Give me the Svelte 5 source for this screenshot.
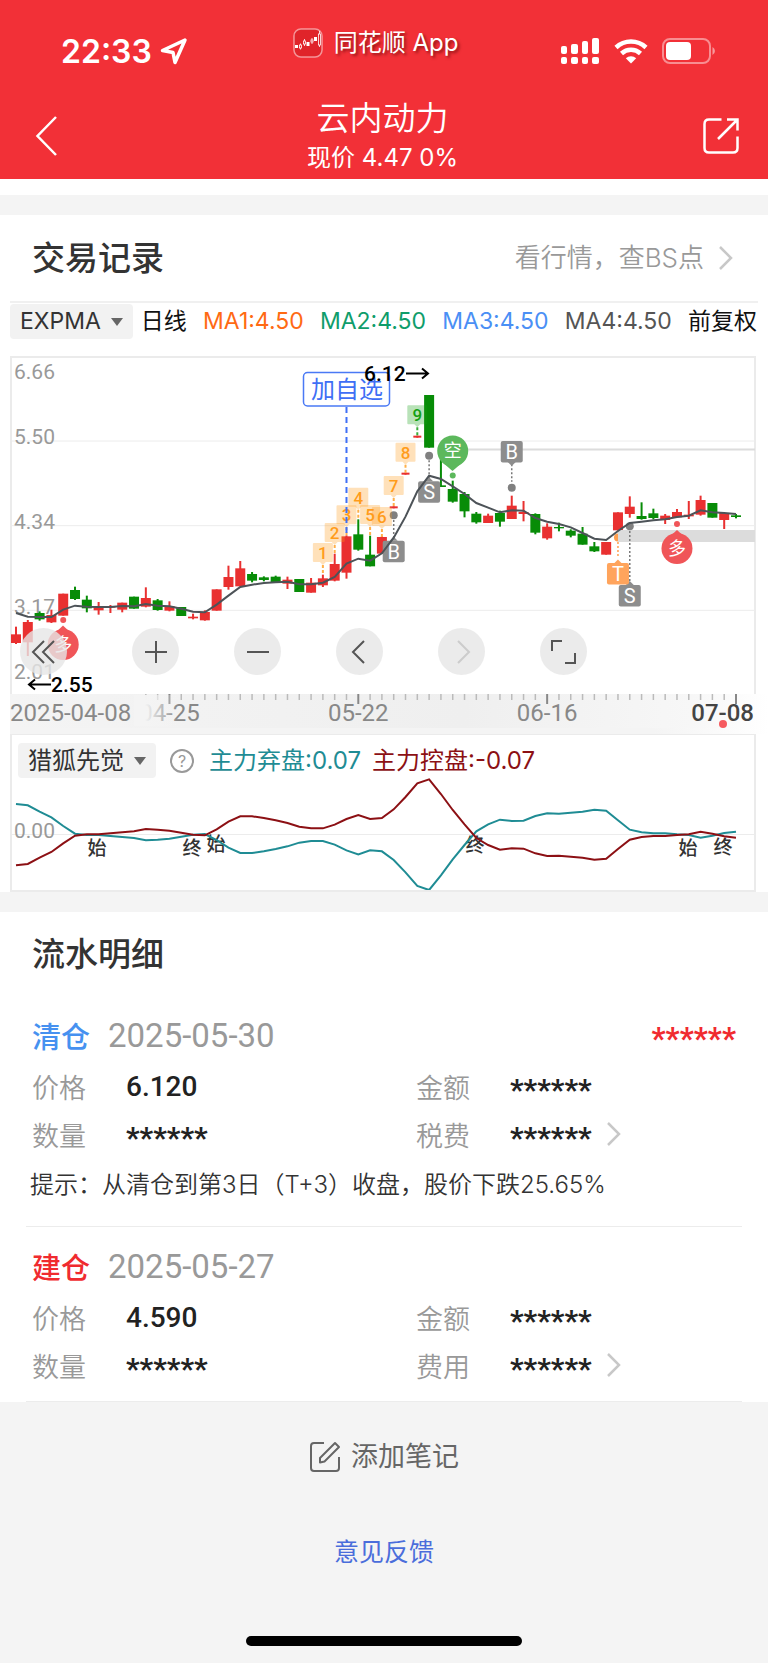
<script>
  const step = 720 / 61;
  const x = (i) => 16 + i * step;
  // series heights are kept at three units per chart pixel
  const y = (v) => v / 3;

  // colour, body top, body bottom, wick top, wick bottom
  const candles = [
    ['r', 853, 879, 830, 882], ['r', 816, 877, 810, 918], ['g', 789, 808, 784, 812], ['r', 795, 817, 779, 819],
    ['r', 731, 797, 731, 797], ['g', 720, 747, 710, 750], ['g', 749, 775, 737, 787], ['r', 772, 781, 756, 794],
    ['r', 770, 773, 765, 789], ['r', 758, 779, 758, 787], ['g', 740, 776, 740, 776], ['r', 744, 770, 712, 772],
    ['g', 751, 780, 747, 782], ['r', 768, 782, 754, 784], ['g', 771, 798, 771, 798], ['r', 800, 805, 791, 808],
    ['r', 786, 811, 781, 812], ['r', 718, 782, 718, 782], ['r', 681, 711, 647, 719], ['r', 655, 709, 633, 709],
    ['g', 672, 692, 666, 697], ['g', 682, 690, 679, 694], ['g', 680, 696, 677, 696], ['r', 689, 701, 680, 717],
    ['g', 687, 726, 687, 726], ['r', 698, 728, 684, 728], ['r', 685, 706, 674, 711], ['r', 642, 692, 611, 694],
    ['r', 559, 668, 556, 686], ['g', 553, 599, 508, 602], ['g', 614, 649, 557, 649], ['r', 561, 611, 558, 611],
    ['r', 469, 475, 469, 475], ['r', 368, 374, 368, 374], ['r', 257, 263, 257, 263], ['g', 135, 293, 135, 293],
    ['g', 406, 411, 298, 411], ['g', 417, 455, 392, 458], ['g', 432, 484, 426, 502], ['g', 491, 517, 486, 521],
    ['r', 497, 519, 491, 519], ['g', 489, 515, 482, 530], ['r', 467, 507, 437, 507], ['r', 486, 492, 453, 514],
    ['g', 492, 548, 490, 553], ['r', 530, 565, 520, 569], ['g', 531, 535, 518, 544], ['g', 542, 557, 538, 562],
    ['g', 551, 584, 531, 584], ['g', 589, 604, 576, 606], ['r', 576, 614, 576, 614], ['r', 487, 541, 487, 541],
    ['r', 470, 492, 439, 503], ['g', 498, 507, 457, 509], ['g', 490, 504, 476, 508], ['r', 497, 510, 492, 522],
    ['r', 486, 502, 477, 502], ['r', 494, 499, 453, 507], ['r', 450, 494, 437, 497], ['g', 459, 503, 459, 503],
    ['r', 489, 510, 489, 537], ['g', 496, 501, 492, 505]
  ];

  const average = [
    789, 800, 801, 801, 779, 767, 770, 771, 771, 768, 769, 762, 767, 769, 776, 785, 787, 764, 737, 711, 704,
    699, 697, 695, 703, 703, 698, 681, 641, 626, 632, 610, 563, 500, 424, 377, 387, 409, 432, 459, 473,
    487, 481, 482, 504, 515, 522, 532, 549, 566, 570, 543, 519, 515, 511, 508, 501, 497, 481, 487, 489, 492
  ];

  const discard = [
    237, 241, 260, 277, 303, 326, 330, 330, 333, 336, 339, 346, 344, 341, 335, 329, 327, 345, 368, 384, 384,
    379, 372, 364, 353, 348, 348, 359, 376, 388, 376, 379, 405, 442, 483, 495, 451, 403, 360, 319, 298,
    284, 288, 287, 273, 265, 266, 263, 260, 254, 257, 286, 314, 322, 325, 325, 328, 330, 338, 332, 324, 320
  ];
  const control = discard.map((v) => 658 - v);

  const line = (points) => points.map((v, i) => `${x(i)},${y(v)}`).join(' ');

  // nine-turn counters: candle, top of the flag, end of its stem
  const counters = [
    [26, 579, 674], [27, 519, 611], [28, 466, 559], [29, 413, 508], [30, 465, 557],
    [31, 471, 561], [32, 378, 470], [33, 278, 368], [34, 166, 257]
  ];

  // letter, candle, dot, box top
  const trades = [
    ['S', 35, 317, 394],
    ['B', 32, 496, 572],
    ['B', 42, 413, 273],
    ['S', 52, 529, 705]
  ];

  const grid = [273, 527, 781];
  const prices = [['6.66', 88], ['5.50', 283], ['4.34', 537], ['3.17', 791], ['2.01', 986]];
  const dates = [['04-25', 13], ['05-22', 29], ['06-16', 45]];
  const ticks = Array.from({ length: 51 }, (_, k) => k + 11);
  const phases = [['始', 97, 130], ['终', 192, 130], ['始', 216, 126], ['终', 475, 127], ['始', 688, 130], ['终', 723, 129]];

  const averages = [
    ['MA1:4.50', 'ma1'],
    ['MA2:4.50', 'ma2'],
    ['MA3:4.50', 'ma3'],
    ['MA4:4.50', 'ma4']
  ];

  const records = [
    { kind: '清仓', cls: 'sell', date: '2025-05-30', profit: '******', price: '6.120', fee: '税费', hint: '提示：从清仓到第3日（T+3）收盘，股价下跌25.65%' },
    { kind: '建仓', cls: 'buy', date: '2025-05-27', profit: '', price: '4.590', fee: '费用', hint: '' }
  ];
</script>

{#snippet arrow()}
  <svg class="arrow" width="16" height="26" viewBox="0 0 16 26"><path d="M2 2L13 13L2 24" fill="none" stroke="#c8c8c8" stroke-width="2.500" /></svg>
{/snippet}

<div class="page">
  <header>
    <div class="status">
      <div class="time">
        22:33
        <svg width="28" height="28" viewBox="0 0 28 28"><path d="M25 3L2.500 13.500L13 15.500L15 25.500Z" fill="none" stroke="#fff" stroke-width="3.500" stroke-linejoin="round" /></svg>
      </div>
      <div class="app">
        <svg width="30" height="30" viewBox="0 0 30 30">
          <rect x="1" y="1" width="28" height="28" rx="7" fill="#e0242a" stroke="#fff" stroke-opacity=".5" stroke-width="1.500" />
          <g fill="#fff"><rect x="2" y="17" width="3" height="3" /><rect x="13.500" y="14" width="3" height="4" /><rect x="21" y="9" width="3" height="4" /></g>
          <g fill="none" stroke="#fff" stroke-width=".8"><path d="M7.500 15.500v6M11.500 11v7M19 10v6M26.500 3v16" /><rect x="6.500" y="17" width="2" height="3" fill="#e0242a" /><rect x="10.500" y="13" width="2" height="3" fill="#e0242a" /><rect x="18" y="12" width="2" height="2" fill="#e0242a" /><rect x="25.500" y="6" width="2" height="11" fill="#e0242a" /></g>
        </svg>
        <span>同花顺 App</span>
      </div>
      <div class="signals">
        <svg width="40" height="28" viewBox="0 0 40 28" fill="#fff">
          <rect x="1" y="9" width="6" height="8" rx="2" /><rect x="11" y="7" width="7" height="10" rx="2" /><rect x="22" y="4" width="6" height="13" rx="2" /><rect x="32" y="1" width="7" height="16" rx="2" />
          <rect x="1" y="20" width="6" height="7" rx="2" /><rect x="11" y="20" width="7" height="7" rx="2" /><rect x="22" y="20" width="6" height="7" rx="2" /><rect x="32" y="20" width="7" height="7" rx="2" />
        </svg>
        <svg width="34" height="26" viewBox="0 0 34 26">
          <g fill="none" stroke="#fff" stroke-width="4.500"><path d="M2 9.500A22 22 0 0 1 32 9.500" /><path d="M7.500 15.500A14 14 0 0 1 26.500 15.500" /></g>
          <path d="M17 25.500L11.800 20.300A7.500 7.500 0 0 1 22.200 20.300Z" fill="#fff" />
        </svg>
        <svg width="54" height="26" viewBox="0 0 54 26">
          <rect x="1" y="1" width="47" height="24" rx="7" fill="none" stroke="#fff" stroke-opacity=".45" stroke-width="2" />
          <rect x="4" y="4" width="25" height="18" rx="4" fill="#fff" /><path d="M50.500 9a4.500 4.500 0 0 1 0 8z" fill="#fff" fill-opacity=".5" />
        </svg>
      </div>
    </div>
    <div class="nav">
      <button class="icon back" aria-label="返回">
        <svg width="24" height="42" viewBox="0 0 24 42"><path d="M21 2L2.500 21L21 40" fill="none" stroke="#fff" stroke-width="2.500" /></svg>
      </button>
      <div class="stock">
        <h1>云内动力</h1>
        <p>现价 4.47 0%</p>
      </div>
      <button class="icon" aria-label="分享">
        <svg width="38" height="38" viewBox="0 0 38 38" fill="none" stroke="#fff" stroke-width="2.500">
          <path d="M19.500 2.500H7Q2.500 2.500 2.500 7V31Q2.500 35.500 7 35.500H31Q35.500 35.500 35.500 31V19.500M25 2.500H35.500V13.500M35.500 2.500L16 22" />
        </svg>
      </button>
    </div>
  </header>

  <section class="trading">
    <div class="heading">
      <h2>交易记录</h2>
      <a href="#quotes">看行情，查BS点 {@render arrow()}</a>
    </div>

    <div class="legend">
      <button class="picker">EXPMA <i></i></button>
      <div class="values">
        <span>日线</span>
        {#each averages as [text, cls]}
          <span class={cls}>{text}</span>
        {/each}
        <span>前复权</span>
      </div>
    </div>

    <div class="chart">
      <svg viewBox="0 0 768 378" role="img" aria-label="日K线">
        <defs>
          <linearGradient id="strip"><stop offset="0" stop-color="#f4f4f4" /><stop offset=".6" stop-color="#efefef" /><stop offset=".9" stop-color="#f7f7f7" /><stop offset="1" stop-color="#fff" /></linearGradient>
          <linearGradient id="fade"><stop offset="0" stop-color="#f4f4f4" /><stop offset=".25" stop-color="#f4f4f4" /><stop offset="1" stop-color="#f4f4f4" stop-opacity="0" /></linearGradient>
        </defs>
        <path d="M11 344V7H755V344" fill="none" stroke="#ebebeb" stroke-width="2" />
        <rect x="10" y="344" width="758" height="34" fill="url(#strip)" />

        {#each grid as g}
          <path d="M10 {y(g)}H755" stroke="#ececec" />
        {/each}
        <path d="M468 99.500H755" stroke="#dcdcdc" stroke-width="2" />

        <g class="price">
          {#each prices as [text, base]}
            <text x="14" y={y(base)}>{text}</text>
          {/each}
        </g>

        {#each candles as [c, top, bottom, high, low], i}
          <g class={c}>
            <rect x={x(i) - 1} y={y(high)} width="2" height={y(low - high)} />
            <rect x={x(i) - (i > 31 && i < 35 ? 4 : 5)} y={y(top)} width={i > 31 && i < 35 ? 8 : 10} height={y(bottom - top)} />
          </g>
        {/each}

        <circle cx={x(51)} cy="187.500" r="4" fill="#ff9f4f" />
        <rect x="618" y="180" width="137" height="12" fill="#dcdcdc" />

        <!-- trade markers -->
        {#each trades as [letter, i, dot, top]}
          <path d={dot > top ? `M${x(i)} ${y(top + 70)}V${y(dot - 18)}` : `M${x(i)} ${y(dot + 14)}V${y(top - 6)}`} stroke="#777" stroke-width="1.500" stroke-dasharray="2 2" />
          <circle cx={x(i)} cy={y(dot)} r="4" fill="#808080" />
          <rect x={x(i) - 11} y={y(top)} width="22" height="21.500" rx="2" fill="#8d8d8d" />
          <path d={dot > top ? `M${x(i) - 4} ${y(top + 63)}h8l-4 4z` : `M${x(i) - 4} ${y(top)}h8l-4 -4z`} fill="#8d8d8d" />
          <text class="letter" x={x(i)} y={y(top) + 18}>{letter}</text>
        {/each}
        <path d="M{x(51)} 192V206" stroke="#ff9f4f" stroke-width="1.500" stroke-dasharray="2 2" />
        <rect x={x(51) - 11} y="213" width="22" height="21.500" rx="2" fill="#ffa45c" />
        <path d="M{x(51) - 4} 213.500h8l-4 -4z" fill="#ffa45c" />
        <text class="letter" x={x(51)} y="231">T</text>

        <polyline points={line(average)} fill="none" stroke="#4d5358" stroke-width="2" />

        <!-- counters -->
        {#each counters as [i, top, end], k}
          <g class={k === 8 ? 'nine' : 'count'}>
            <path class="stem" d="M{x(i)} {y(top + 66)}V{y(end)}" />
            <path class="flag" d="M{x(i) - 9} {y(top)}h18q1 0 1 1v17q0 1 -1 1h-6l-3 3l-3 -3h-6q-1 0 -1 -1v-17q0 -1 1 -1z" />
            <text x={x(i)} y={y(top) + 16}>{k + 1}</text>
          </g>
        {/each}

        <!-- added to watch list -->
        <rect x="303.500" y="22.500" width="86" height="33.500" rx="4" fill="#fff" stroke="#4a79f5" stroke-width="1.500" />
        <path d="M{x(28)} 57V186" stroke="#3f6ff5" stroke-width="2" stroke-dasharray="6 4" />
        <text class="watch" x="347" y="48">加自选</text>

        <!-- long and short signals -->
        <g class="short">
          <path d="M442 112L452.500 121L463 112Z" /><circle cx={x(37)} cy="101" r="15.500" /><circle cx={x(37)} cy="125.500" r="3" />
          <text x={x(37)} y="107">空</text>
        </g>
        <g class="long">
          <path d="M666 190L677 180L688 190Z" /><circle cx={x(56)} cy="198.500" r="15.500" /><circle cx={x(56)} cy="174" r="3" />
          <text x={x(56)} y="205">多</text>
          <path d="M52 286L63 275.500L74 286Z" /><circle cx={x(4)} cy="294.500" r="15.500" /><circle cx={x(4)} cy="270" r="3" />
          <text x={x(4)} y="301">多</text>
        </g>

        <g class="extreme">
          <text x="364" y="31">6.12</text><path d="M406 23.500H427M422 18.500L428 23.500L422 28.500" />
          <text x="51" y="342">2.55</text><path d="M51 334.500H30M35 329.500L29 334.500L35 339.500" />
        </g>

        <!-- time axis -->
        {#each ticks as i}
          <path d="M{x(i)} 344V{i % 16 === 13 ? 354 : 350}" stroke={i % 16 === 13 ? '#888' : '#bbb'} stroke-width={i % 16 === 13 ? 2 : 1.5} />
        {/each}
        <g class="date">
          {#each dates as [text, i]}
            <text x={x(i)} y="371" text-anchor="middle">{text}</text>
          {/each}
          <rect x="134" y="345" width="44" height="31" fill="url(#fade)" />
          <text x="10" y="371">2025-04-08</text>
          <text class="now" x="754" y="371" text-anchor="end">07-08</text>
        </g>
        <circle cx="723" cy="374" r="4" fill="#f65a5f" />
      </svg>

      <div class="tools">
        <button aria-label="最早"><svg viewBox="0 0 47 47"><path d="M24 13L13 24L24 35M34 13L23 24L34 35" /></svg></button>
        <button aria-label="放大"><svg viewBox="0 0 47 47"><path d="M13 24H35M24 13V35" /></svg></button>
        <button aria-label="缩小"><svg viewBox="0 0 47 47"><path d="M13 24H35" /></svg></button>
        <button aria-label="上一段"><svg viewBox="0 0 47 47"><path d="M28 13L17 24L28 35" /></svg></button>
        <button aria-label="下一段" disabled><svg viewBox="0 0 47 47"><path d="M20 13L31 24L20 35" /></svg></button>
        <button aria-label="全屏"><svg viewBox="0 0 47 47"><path d="M12 23V13H22M25 35H35V25" /></svg></button>
      </div>
    </div>

    <div class="strip"></div>

    <div class="indicator">
      <div class="legend">
        <button class="picker">猎狐先觉 <i></i></button>
        <button class="help" aria-label="说明">?</button>
        <span class="discard">主力弃盘:0.07</span>
        <span class="control">主力控盘:-0.07</span>
      </div>
      <svg viewBox="12 53 742 112" role="img" aria-label="猎狐先觉">
        <path d="M12 109.500H754" stroke="#ececec" />
        <text class="zero" x="14" y="113">0.00</text>
        {#each phases as [text, px, py]}
          <text class="phase" x={px} y={py}>{text}</text>
        {/each}
        <polyline points={line(discard)} fill="none" stroke="#1f8c94" stroke-width="2" />
        <polyline points={line(control)} fill="none" stroke="#8c1014" stroke-width="2" />
      </svg>
    </div>
  </section>

  <section class="details">
    <h2>流水明细</h2>
    {#each records as r}
      <article>
        <div class="top">
          <strong class={r.cls}>{r.kind}</strong>
          <time>{r.date}</time>
          <span class="mask profit">{r.profit}</span>
        </div>
        <dl>
          <div><dt>价格</dt><dd>{r.price}</dd></div>
          <div><dt>金额</dt><dd class="mask">******</dd></div>
          <div><dt>数量</dt><dd class="mask">******</dd></div>
          <div><dt>{r.fee}</dt><dd class="mask">******</dd>{@render arrow()}</div>
        </dl>
        {#if r.hint}
          <p>{r.hint}</p>
        {/if}
      </article>
    {/each}
  </section>

  <footer>
    <button class="note">
      <svg width="32" height="32" viewBox="0 0 32 32" fill="none" stroke="#666" stroke-width="2">
        <path d="M15 2H5Q2 2 2 5V27Q2 30 5 30H27Q30 30 30 27V16" />
        <path d="M11 21.500V17L26 2L30 6L15.500 20.500Z" stroke-linejoin="round" />
      </svg>
      添加笔记
    </button>
    <a href="#feedback">意见反馈</a>
    <div class="home"></div>
  </footer>
</div>

<style>
  :global(body) {
    background: #f4f4f4;
  }

  .page {
    font-family: Inter, "Noto Sans CJK SC", sans-serif;
    color: #333;
  }

  h1, h2, p, dl, dd {
    margin: 0;
  }

  button {
    font: inherit;
    color: inherit;
    border: none;
    padding: 0;
    background: none;
    cursor: pointer;
  }

  a {
    text-decoration: none;
  }

  svg {
    display: block;
  }

  header {
    background: #f23037;
    color: #fff;
    border-bottom: 16px solid #fff;
  }

  .status {
    display: grid;
    grid-template-columns: 1fr auto 1fr;
    align-items: center;
    height: 98px;
    padding: 0 52px 0 61px;
  }

  .time {
    display: flex;
    align-items: center;
    gap: 8px;
    font-size: 32px;
    font-weight: 600;
    padding-top: 4px;
  }

  .app {
    display: flex;
    align-items: center;
    gap: 11px;
    font-size: 24px;
    padding: 0 26px 12px 0;
  }

  .app span {
    line-height: 30px;
    text-shadow: 2px 2px 3px rgba(80, 0, 0, .6);
  }

  .signals {
    display: flex;
    align-items: center;
    justify-content: flex-end;
    gap: 14px;
    padding-top: 4px;
  }

  .nav {
    display: flex;
    justify-content: space-between;
    height: 81px;
    padding: 0 28px 0 35px;
  }

  .icon {
    height: 76px;
  }

  .back {
    width: 28px;
  }

  .stock {
    text-align: center;
  }

  .stock h1 {
    font-size: 33px;
    line-height: 40px;
    font-weight: 350;
  }

  .stock p {
    font-size: 24px;
    line-height: 40px;
  }

  .trading {
    background: #fff;
    border-top: 20px solid #f4f4f4;
  }

  .heading {
    display: flex;
    justify-content: space-between;
    align-items: center;
    height: 86px;
    margin: 0 10px;
    padding: 0 24px 0 22px;
    border-bottom: 2px solid #f0f0f0;
  }

  h2 {
    font-size: 33px;
    line-height: 44px;
    font-weight: 500;
  }

  .heading a {
    display: flex;
    align-items: center;
    gap: 14px;
    font-size: 26px;
    line-height: 36px;
    font-weight: 350;
    color: #999;
  }

  .legend {
    display: flex;
    align-items: center;
    font-size: 23px;
    line-height: 35px;
    white-space: nowrap;
  }

  .picker {
    display: flex;
    align-items: center;
    gap: 10px;
    height: 35px;
    padding: 0 10px;
    background: #f2f2f2;
    border-radius: 4px;
  }

  .picker i {
    border: 6px solid transparent;
    border-top: 8px solid #666;
    border-bottom: 0;
  }

  .trading > .legend {
    padding: 1px 11px 11px 10px;
  }

  .values {
    flex: 1;
    display: flex;
    align-items: baseline;
    justify-content: space-between;
    padding-left: 8px;
    color: #111;
  }

  .ma1 { color: #ff6a13; }
  .ma2 { color: #0f9d6b; }
  .ma3 { color: #4a8ff5; }
  .ma4 { color: #555; }

  .chart {
    position: relative;
  }

  .chart > svg, .indicator > svg {
    width: 100%;
    height: auto;
  }

  .r { fill: #e93030; }
  .g { fill: #078c07; }

  text {
    font-family: Roboto, "Noto Sans CJK SC", sans-serif;
  }

  .price, .zero {
    font-size: 21px;
    fill: #999;
  }

  .letter {
    font-size: 20px;
    fill: #fff;
    text-anchor: middle;
  }

  .count text, .nine text {
    font-size: 17px;
    font-weight: 500;
    text-anchor: middle;
  }

  .count { fill: #ff9c1a; stroke: none; }
  .nine { fill: #13a013; }
  .flag { opacity: .3; }

  .stem {
    stroke: #ffb04a;
    stroke-width: 2;
    stroke-dasharray: 3 2;
  }

  .nine .stem {
    stroke: #3aae3a;
  }

  .watch {
    font-size: 24px;
    fill: #3f6ff5;
    text-anchor: middle;
  }

  .short, .long {
    fill: #5cb85c;
    font-size: 18px;
    text-anchor: middle;
  }

  .long {
    fill: #f05558;
  }

  .short text, .long text {
    fill: #fff;
  }

  .extreme {
    font-size: 21px;
    font-weight: 500;
  }

  .extreme path {
    fill: none;
    stroke: #000;
    stroke-width: 2;
  }

  .date {
    font-size: 24px;
  }

  .date text {
    fill: #888;
  }

  .date .now {
    fill: #444;
    font-weight: 500;
  }

  .tools {
    position: absolute;
    left: 20px;
    bottom: 53px;
    display: flex;
    gap: 55px;
  }

  .tools button {
    width: 47px;
    height: 47px;
    border-radius: 50%;
    background: rgba(230, 230, 230, .8);
  }

  .tools button:first-child {
    margin-right: 10px;
  }

  .tools path {
    fill: none;
    stroke: #555;
    stroke-width: 2;
  }

  .tools button:disabled path {
    stroke: #ccc;
  }

  .strip {
    height: 6px;
    margin-left: 10px;
    background: linear-gradient(to right, #f4f4f4 85%, #fff);
  }

  .indicator {
    margin: 0 12px 0 10px;
    border: 2px solid #ebebeb;
    border-top-width: 1px;
  }

  .indicator .legend {
    padding: 8px 6px 0;
    font-size: 24px;
  }

  .help {
    width: 24px;
    height: 24px;
    margin: 0 15px 0 14px;
    border: 2px solid #999;
    border-radius: 50%;
    font-size: 16px;
    line-height: 20px;
    color: #999;
  }

  .discard {
    color: #1f8c94;
    margin-right: 11px;
  }

  .control {
    color: #8c1014;
  }

  .phase {
    font-size: 19px;
    font-weight: 500;
    fill: #333;
    text-anchor: middle;
  }

  .details {
    border-top: 20px solid #f4f4f4;
    background: #fff;
  }

  .details h2 {
    padding: 20px 32px 32px;
  }

  article {
    padding-bottom: 13px;
    background: linear-gradient(#ececec, #ececec) bottom center / calc(100% - 52px) 1px no-repeat;
  }

  article + article {
    padding-top: 12px;
  }

  .top {
    display: flex;
    align-items: center;
    height: 54px;
    padding: 0 32px;
  }

  .top strong {
    font-size: 29px;
    font-weight: 500;
  }

  .sell { color: #4691f0; }
  .buy { color: #f02b2f; }

  time {
    margin: 0 auto 0 18px;
    font-family: Roboto, sans-serif;
    font-size: 33px;
    color: #999;
  }

  dl {
    display: grid;
    grid-template-columns: 1fr 1fr;
  }

  dl div {
    display: flex;
    align-items: center;
    height: 48px;
    padding-left: 32px;
  }

  dt {
    width: 94px;
    font-size: 27px;
    font-weight: 350;
    color: #999;
  }

  dd {
    font-family: Roboto, sans-serif;
    font-size: 28px;
    font-weight: 500;
    color: #222;
  }

  .mask {
    padding-top: 8px;
    font-family: Roboto, sans-serif;
    font-size: 30px;
    line-height: 32px;
    font-weight: 700;
  }

  .profit {
    font-size: 31px;
    color: #f02b2f;
  }

  dl .arrow {
    margin-left: 14px;
  }

  article p {
    padding: 9px 30px 11px;
    font-size: 24px;
    line-height: 36px;
    font-weight: 350;
  }

  footer {
    display: flex;
    flex-direction: column;
    align-items: center;
    padding-bottom: 17px;
  }

  .note {
    display: flex;
    align-items: center;
    gap: 10px;
    margin: 35px 0 55px;
    font-size: 27px;
    line-height: 40px;
    color: #666;
  }

  footer a {
    font-size: 25px;
    line-height: 40px;
    color: #4a6ddb;
  }

  .home {
    width: 36%;
    height: 10px;
    margin-top: 64px;
    border-radius: 5px;
    background: #000;
  }
</style>
